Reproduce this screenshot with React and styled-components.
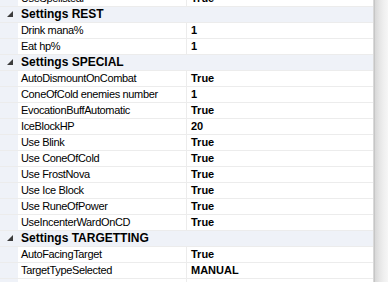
import React from "react";
import styled, { createGlobalStyle } from "styled-components";

const Global = createGlobalStyle`
  html, body { margin: 0; padding: 0; background: #fff; overflow: hidden; }
  body { font-family: "Liberation Sans", Arial, sans-serif; }
`;

const LINE = "#eff2f8";
const DIV = "#ececec";

const Frame = styled.div`
  display: flex;
  width: 388px;
  height: 282px;
  overflow: hidden;
  background: #fff;
`;

const Grid = styled.div`
  flex: 1;
  display: flex;
  flex-direction: column;
  margin-top: -9px;
  border-right: 1px solid #d9d9d9;
`;

const Row = styled.div`
  display: grid;
  grid-template-columns: 18px 168px 1px 1fr;
  height: 15px;
  flex-shrink: 0;
  border-bottom: 1px solid ${DIV};
  font-size: 11px;
  color: #000;
  line-height: 15px;
`;

const Margin = styled.div`
  background: ${LINE};
`;

const Name = styled.div`
  padding-left: 3px;
  white-space: nowrap;
  overflow: hidden;
  letter-spacing: -0.35px;
`;

const Divider = styled.div`
  background: ${DIV};
`;

const Value = styled.div`
  padding-left: 4px;
  font-weight: bold;
  white-space: nowrap;
  overflow: hidden;
`;

const CatRow = styled.div`
  display: grid;
  grid-template-columns: 18px 1fr;
  height: 15px;
  flex-shrink: 0;
  border-bottom: 1px solid ${DIV};
  background: ${LINE};
  font-size: 12px;
  font-weight: bold;
  line-height: 15px;
  color: #000;
`;

const Toggle = styled.div`
  display: flex;
  align-items: center;
  justify-content: center;
  padding-left: 2px;
`;

const CatName = styled.div`
  padding-left: 3px;
  white-space: nowrap;
`;

const Scroll = styled.div`
  width: 13px;
  background: linear-gradient(to right, #d8d8d8 0%, #e6e6e6 35%, #f0f0f0 70%, #f6f6f6 100%);
  border-left: 1px solid #c6c6c6;
`;

const Tri = () => (
  <svg width="7" height="7" viewBox="0 0 7 7">
    <polygon points="6,0 6,6 0,6" fill="#3c3c3c" />
  </svg>
);

const data = [
  { type: "row", name: "UseSpellsteal", value: "True" },
  { type: "cat", name: "Settings REST" },
  { type: "row", name: "Drink mana%", value: "1" },
  { type: "row", name: "Eat hp%", value: "1" },
  { type: "cat", name: "Settings SPECIAL" },
  { type: "row", name: "AutoDismountOnCombat", value: "True" },
  { type: "row", name: "ConeOfCold enemies number", value: "1" },
  { type: "row", name: "EvocationBuffAutomatic", value: "True" },
  { type: "row", name: "IceBlockHP", value: "20" },
  { type: "row", name: "Use Blink", value: "True" },
  { type: "row", name: "Use ConeOfCold", value: "True" },
  { type: "row", name: "Use FrostNova", value: "True" },
  { type: "row", name: "Use Ice Block", value: "True" },
  { type: "row", name: "Use RuneOfPower", value: "True" },
  { type: "row", name: "UseIncenterWardOnCD", value: "True" },
  { type: "cat", name: "Settings TARGETTING" },
  { type: "row", name: "AutoFacingTarget", value: "True" },
  { type: "row", name: "TargetTypeSelected", value: "MANUAL" },
  { type: "row", name: "Timer", value: "" },
];

export default function App() {
  return (
    <>
      <Global />
      <Frame>
        <Grid>
          {data.map((d, i) =>
            d.type === "cat" ? (
              <CatRow key={i}>
                <Toggle><Tri /></Toggle>
                <CatName>{d.name}</CatName>
              </CatRow>
            ) : (
              <Row key={i}>
                <Margin />
                <Name>{d.name}</Name>
                <Divider />
                <Value>{d.value}</Value>
              </Row>
            )
          )}
        </Grid>
        <Scroll />
      </Frame>
    </>
  );
}
